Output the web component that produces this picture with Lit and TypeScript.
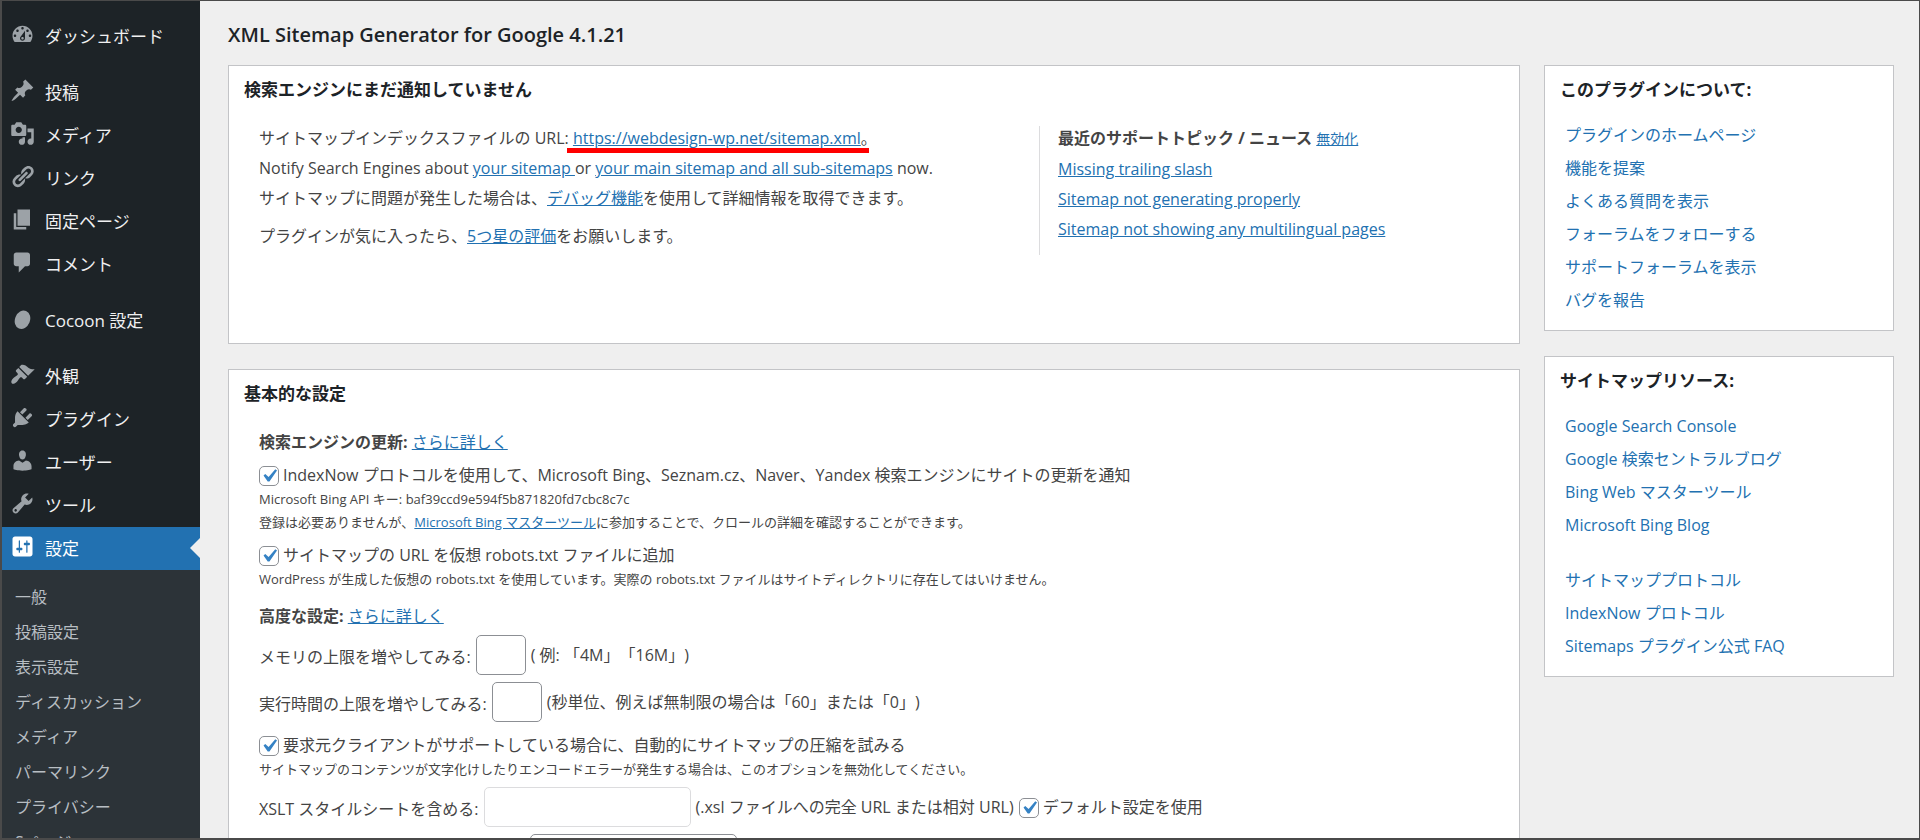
import { LitElement, html, css, svg, nothing } from "lit";
import { customElement, property } from "lit/decorators.js";
import { classMap } from "lit/directives/class-map.js";

const icons: Record<string, unknown> = {
  dashboard: svg`<path d="M3.76 16h12.48c1.1-1.37 1.76-3.11 1.76-5 0-4.42-3.58-8-8-8s-8 3.58-8 8c0 1.89.66 3.63 1.76 5zM10 4c.55 0 1 .45 1 1s-.45 1-1 1-1-.45-1-1 .45-1 1-1zM6 6c.55 0 1 .45 1 1s-.45 1-1 1-1-.45-1-1 .45-1 1-1zm8 0c.55 0 1 .45 1 1s-.45 1-1 1-1-.45-1-1 .45-1 1-1zm-5.37 5.55L12 7v6c0 1.1-.9 2-2 2s-2-.9-2-2c0-.57.24-1.08.63-1.45zM4 10c.55 0 1 .45 1 1s-.45 1-1 1-1-.45-1-1 .45-1 1-1zm12 0c.55 0 1 .45 1 1s-.45 1-1 1-1-.45-1-1 .45-1 1-1zm-5 3c0-.55-.45-1-1-1s-1 .45-1 1 .45 1 1 1 1-.45 1-1z"/>`,
  post: svg`<path d="M10.44 3.02l1.82-1.82 6.36 6.35-1.83 1.82c-1.05-.68-2.48-.57-3.41.36l-.75.75c-.92.93-1.04 2.35-.35 3.41l-1.83 1.82-2.41-2.41-2.8 2.79c-.42.42-3.38 2.71-3.8 2.29s1.86-3.39 2.28-3.81l2.79-2.79L4.1 9.36l1.83-1.82c1.05.69 2.48.57 3.4-.36l.75-.75c.93-.92 1.05-2.35.36-3.41z"/>`,
  media: svg`<path d="M13 11V4c0-.55-.45-1-1-1h-1.67L9 1H5L3.67 3H2c-.55 0-1 .45-1 1v7c0 .55.45 1 1 1h10c.55 0 1-.45 1-1zM7 4.5c1.38 0 2.5 1.12 2.5 2.5S8.38 9.5 7 9.5 4.5 8.38 4.5 7 5.62 4.5 7 4.5zM14 6h5v10.5c0 1.38-1.12 2.5-2.5 2.5S14 17.88 14 16.5s1.12-2.5 2.5-2.5c.17 0 .34.02.5.05V9h-3V6zm-4 8.05V13h2v3.5c0 1.38-1.12 2.5-2.5 2.5S7 17.88 7 16.5 8.12 14 9.5 14c.17 0 .34.02.5.05z"/>`,
  link: svg`<path d="M17.74 2.76c1.68 1.69 1.68 4.41 0 6.1l-1.53 1.52c-1.12 1.12-2.7 1.47-4.14 1.09l2.62-2.61.76-.77.76-.76c.84-.84.84-2.2 0-3.04-.84-.85-2.2-.85-3.04 0l-.77.76-3.38 3.38c-.37-1.44-.02-3.02 1.1-4.14l1.52-1.53c1.69-1.68 4.42-1.68 6.1 0zM8.59 13.43l5.34-5.34c.42-.42.42-1.1 0-1.52-.44-.43-1.13-.39-1.53 0l-5.33 5.34c-.42.42-.42 1.1 0 1.52.44.43 1.13.39 1.52 0zm-.76 2.29l4.14-4.15c.38 1.44.03 3.02-1.09 4.14l-1.52 1.53c-1.69 1.68-4.41 1.68-6.1 0-1.68-1.68-1.68-4.42 0-6.1l1.53-1.52c1.12-1.12 2.7-1.47 4.14-1.1l-4.14 4.15c-.85.84-.85 2.2 0 3.05.84.84 2.2.84 3.04 0z"/>`,
  page: svg`<path d="M6 15V2h10v13H6zm-1 1h8v2H3V5h2v11z"/>`,
  comment: svg`<path d="M5 2h9c1.1 0 2 .9 2 2v7c0 1.1-.9 2-2 2h-2l-5 5v-5H5c-1.1 0-2-.9-2-2V4c0-1.1.9-2 2-2z"/>`,
  cocoon: svg`<ellipse cx="10" cy="11" rx="6" ry="7.6" transform="rotate(22 10 11)"/>`,
  appearance: svg`<path d="M14.48 11.06L7.41 3.99l1.5-1.5c.5-.56 2.3-.47 3.51.32 1.21.8 1.43 1.28 2.91 2.1 1.18.64 2.45 1.26 4.45.85zm-.71.71L6.7 4.7 4.93 6.47c-.39.39-.39 1.02 0 1.41l1.06 1.06c.39.39.39 1.03 0 1.42-.6.6-1.43 1.11-2.21 1.69-.35.26-.7.53-1.01.84C1.43 14.23.4 16.08 1.4 17.07c.99 1 2.84-.03 4.18-1.36.31-.31.58-.66.85-1.02.57-.78 1.08-1.61 1.69-2.21.39-.39 1.02-.39 1.41 0l1.06 1.06c.39.39 1.02.39 1.41 0z"/>`,
  plugin: svg`<path d="M13.11 4.36L9.87 7.6 8 5.73l3.24-3.24c.35-.34 1.05-.2 1.56.32.52.51.66 1.21.31 1.55zm-8 1.77l.91-1.12 9.01 9.01-1.19.84c-.71.71-2.63 1.16-3.82 1.16H6.14L4.9 17.26c-.59.59-1.54.59-2.12 0-.59-.58-.59-1.53 0-2.12l1.24-1.24v-3.88c0-1.13.4-3.19 1.09-3.89zm7.26 3.97l3.24-3.24c.34-.35 1.04-.21 1.55.31.52.51.66 1.21.31 1.55l-3.24 3.25z"/>`,
  user: svg`<path d="M10 9.25c-2.27 0-2.73-3.44-2.73-3.44C7 4.02 7.82 2 9.97 2c2.16 0 2.98 2.02 2.71 3.81 0 0-.41 3.44-2.68 3.44zm0 2.57L12.72 10c2.39 0 4.52 2.33 4.52 4.53v2.49s-3.65 1.13-7.24 1.13c-3.65 0-7.24-1.13-7.24-1.13v-2.49c0-2.25 1.94-4.48 4.47-4.48z"/>`,
  tool: svg`<path d="M16.68 9.77c-1.34 1.34-3.3 1.67-4.95.99l-5.41 6.52c-.99.99-2.59.99-3.58 0s-.99-2.59 0-3.57l6.52-5.42c-.68-1.65-.35-3.61.99-4.95 1.28-1.28 3.12-1.62 4.72-1.06l-2.89 2.89 2.82 2.82 2.86-2.87c.53 1.58.18 3.39-1.08 4.65zM3.81 16.21c.4.39 1.04.39 1.43 0 .4-.4.4-1.04 0-1.43-.39-.4-1.03-.4-1.43 0-.39.39-.39 1.03 0 1.43z"/>`,
  settings: svg`<path d="M18 16V4c0-1.1-.9-2-2-2H4c-1.1 0-2 .9-2 2v12c0 1.1.9 2 2 2h12c1.1 0 2-.9 2-2zM8 11h1c.55 0 1 .45 1 1s-.45 1-1 1H8v1.5c0 .28-.22.5-.5.5s-.5-.22-.5-.5V13H6c-.55 0-1-.45-1-1s.45-1 1-1h1V5.5c0-.28.22-.5.5-.5s.5.22.5.5V11zm5-2h-1c-.55 0-1-.45-1-1s.45-1 1-1h1V5.5c0-.28.22-.5.5-.5s.5.22.5.5V7h1c.55 0 1 .45 1 1s-.45 1-1 1h-1v5.5c0 .28-.22.5-.5.5s-.5-.22-.5-.5V9z"/>`,
};

interface MenuItem {
  icon: string;
  label: string;
  current?: boolean;
}

const menuGroups: MenuItem[][] = [
  [{ icon: "dashboard", label: "ダッシュボード" }],
  [
    { icon: "post", label: "投稿" },
    { icon: "media", label: "メディア" },
    { icon: "link", label: "リンク" },
    { icon: "page", label: "固定ページ" },
    { icon: "comment", label: "コメント" },
  ],
  [{ icon: "cocoon", label: "Cocoon 設定" }],
  [
    { icon: "appearance", label: "外観" },
    { icon: "plugin", label: "プラグイン" },
    { icon: "user", label: "ユーザー" },
    { icon: "tool", label: "ツール" },
    { icon: "settings", label: "設定", current: true },
  ],
];

const subMenu = [
  "一般",
  "投稿設定",
  "表示設定",
  "ディスカッション",
  "メディア",
  "パーマリンク",
  "プライバシー",
  "Sページ",
];

const base = css`
  * {
    box-sizing: border-box;
  }
  h1,
  h2,
  h3,
  p,
  ul {
    margin: 0;
    padding: 0;
  }
  ul {
    list-style: none;
  }
  a {
    color: #2271b1;
  }
`;

@customElement("admin-menu")
export class AdminMenu extends LitElement {
  static styles = [
    base,
    css`
      :host {
        display: block;
        padding-top: 14px;
        background: #1d2327;
        overflow: hidden;
      }
      .menu {
        display: flex;
        flex-direction: column;
        gap: 13px;
      }
      .link {
        position: relative;
        display: flex;
        align-items: center;
        gap: 10px;
        height: 43px;
        padding-left: 8px;
        color: #f0f0f1;
        font-size: 17px;
        line-height: 26px;
        text-decoration: none;
      }
      .icon {
        flex: none;
        width: 25px;
        height: 25px;
        margin-bottom: 4px;
        fill: #9ca2a7;
      }
      .current {
        background: #2271b1;
        color: #fff;
      }
      .current .icon {
        fill: #fff;
      }
      .current::after {
        content: "";
        position: absolute;
        right: 0;
        top: 11px;
        border: 10px solid transparent;
        border-left-width: 0;
        border-right-color: #efefef;
      }
      .sub {
        padding: 10px 0 10px 13px;
        background: #2c3338;
      }
      .sublink {
        display: block;
        color: #b8bec3;
        font-size: 16px;
        line-height: 35px;
        text-decoration: none;
        white-space: nowrap;
      }
    `,
  ];

  render() {
    return html`
      <nav class="menu">
        ${menuGroups.map(
          (group) => html`<ul>
            ${group.map(
              (item) => html`<li>
                <a
                  href="#"
                  class=${classMap({ link: true, current: !!item.current })}
                >
                  <svg class="icon" viewBox="0 0 20 20" aria-hidden="true">${icons[item.icon]}</svg>
                  <span>${item.label}</span>
                </a>
                ${item.current
                  ? html`<ul class="sub">
                      ${subMenu.map(
                        (s) => html`<li><a class="sublink" href="#">${s}</a></li>`
                      )}
                    </ul>`
                  : nothing}
              </li>`
            )}
          </ul>`
        )}
      </nav>
    `;
  }
}

@customElement("post-box")
export class PostBox extends LitElement {
  @property() heading = "";

  static styles = [
    base,
    css`
      :host {
        display: block;
        border: 1px solid #c3c4c7;
        background: #fff;
      }
      .title {
        padding: 12px 15px 0;
        color: #1d2327;
        font-size: 17px;
        font-weight: 700;
        line-height: 24px;
      }
    `,
  ];

  render() {
    return html`<h3 class="title">${this.heading}</h3>
      <slot></slot>`;
  }
}

@customElement("link-list")
export class LinkList extends LitElement {
  @property({ attribute: false }) groups: string[][] = [];

  static styles = [
    base,
    css`
      :host {
        display: flex;
        flex-direction: column;
        gap: 22px;
        padding: 17px 20px 13px;
      }
      .item {
        display: block;
        line-height: 33px;
        text-decoration: none;
      }
    `,
  ];

  render() {
    return this.groups.map(
      (g) => html`<ul>
        ${g.map((t) => html`<li><a class="item" href="#">${t}</a></li>`)}
      </ul>`
    );
  }
}

@customElement("app-root")
export class AppRoot extends LitElement {
  static styles = [
    base,
    css`
      :host {
        display: grid;
        grid-template-columns: 198px minmax(0, 1fr);
        height: 100vh;
        overflow: hidden;
        border: solid #4a4a4a;
        border-width: 1px 1px 2px 2px;
        box-sizing: border-box;
        background: #efefef;
        color: #444;
        font-family: "Open Sans", "Noto Sans CJK JP", sans-serif;
        font-size: 16px;
        line-height: 24px;
        text-spacing-trim: space-all;
      }
      .main {
        padding: 19px 25px 0 28px;
      }
      .page-title {
        margin-bottom: 15px;
        color: #1d2327;
        font-size: 20px;
        font-weight: 600;
        line-height: 30px;
      }
      .columns {
        display: grid;
        grid-template-columns: minmax(0, 1fr) 350px;
        align-items: start;
        gap: 24px;
      }
      .column {
        display: grid;
        gap: 25px;
      }
      .status {
        display: grid;
        grid-template-columns: 26fr 15fr;
        padding: 24px 30px 88px;
      }
      .lines {
        display: flex;
        flex-direction: column;
        gap: 6px;
      }
      .thanks {
        margin-top: 8px;
      }
      .news {
        padding: 0 0 14px 18px;
        border-left: 1px solid #dcdcde;
      }
      .mark {
        position: relative;
        display: inline-block;
      }
      .mark::after {
        content: "";
        position: absolute;
        left: -6px;
        right: 8px;
        bottom: -3px;
        height: 5px;
        background: #f00;
      }
      .minor {
        font-size: 14px;
      }
      .settings {
        padding: 24px 30px;
      }
      .option {
        margin-top: 9px;
      }
      .check {
        display: flex;
        align-items: center;
        gap: 4px;
      }
      .note {
        padding-top: 1px;
        font-size: 13px;
        line-height: 23px;
      }
      .subhead {
        margin-top: 13px;
      }
      .fields {
        display: grid;
        gap: 7px;
        margin: 7px 0 11px;
      }
      .fields.last {
        margin-top: 6px;
      }
      .field {
        display: flex;
        align-items: center;
        gap: 5px;
      }
      .label {
        padding-top: 4px;
      }
      .box {
        width: 50px;
        height: 40px;
        padding: 0 10px;
        border: 1px solid #8c8f94;
        border-radius: 5px;
        background: #fff;
        color: #2c3338;
        font: inherit;
      }
      .box.wide {
        width: 207px;
      }
      .box:disabled {
        border-color: #dcdcde;
      }
      .tick {
        appearance: none;
        flex: none;
        width: 20px;
        height: 20px;
        margin: 2px 0 0;
        border: 1px solid #8c8f94;
        border-radius: 5px;
        background: #fff;
      }
      .tick:checked {
        background: #fff
          url("data:image/svg+xml,%3Csvg xmlns='http://www.w3.org/2000/svg' viewBox='0 0 20 20'%3E%3Cpath d='M14.83 4.89l1.34.94-5.81 8.38H9.02L5.78 9.67l1.34-1.25 2.57 2.4z' fill='%233582c4'/%3E%3C/svg%3E")
          center / 26px 26px no-repeat;
      }
    `,
  ];

  render() {
    return html`
      <admin-menu></admin-menu>
      <main class="main">
        <h1 class="page-title">XML Sitemap Generator for Google 4.1.21</h1>
        <div class="columns">
          <div class="column">
            <post-box heading="検索エンジンにまだ通知していません">
              <div class="status">
                <div class="lines">
                  <p>サイトマップインデックスファイルの URL: <span class="mark"><a href="#">https://webdesign-wp.net/sitemap.xml</a>。</span></p>
                  <p>Notify Search Engines about <a href="#">your sitemap </a>or <a href="#">your main sitemap and all sub-sitemaps</a> now.</p>
                  <p>サイトマップに問題が発生した場合は、<a href="#">デバッグ機能</a>を使用して詳細情報を取得できます。</p>
                  <p class="thanks">プラグインが気に入ったら、<a href="#">5つ星の評価</a>をお願いします。</p>
                </div>
                <div class="lines news">
                  <p><strong>最近のサポートトピック / ニュース</strong> <a class="minor" href="#">無効化</a></p>
                  <p><a href="#">Missing trailing slash</a></p>
                  <p><a href="#">Sitemap not generating properly</a></p>
                  <p><a href="#">Sitemap not showing any multilingual pages</a></p>
                </div>
              </div>
            </post-box>

            <post-box heading="基本的な設定">
              <form class="settings">
                <p><strong>検索エンジンの更新:</strong> <a href="#">さらに詳しく</a></p>

                <div class="option">
                  <div class="check">
                    <input class="tick" id="indexnow" type="checkbox" checked />
                    <label for="indexnow">IndexNow プロトコルを使用して、Microsoft Bing、Seznam.cz、Naver、Yandex 検索エンジンにサイトの更新を通知</label>
                  </div>
                  <div class="note">
                    <p>Microsoft Bing API キー: baf39ccd9e594f5b871820fd7cbc8c7c</p>
                    <p>登録は必要ありませんが、<a href="#">Microsoft Bing マスターツール</a>に参加することで、クロールの詳細を確認することができます。</p>
                  </div>
                </div>

                <div class="option">
                  <div class="check">
                    <input class="tick" id="robots" type="checkbox" checked />
                    <label for="robots">サイトマップの URL を仮想 robots.txt ファイルに追加</label>
                  </div>
                  <p class="note">WordPress が生成した仮想の robots.txt を使用しています。実際の robots.txt ファイルはサイトディレクトリに存在してはいけません。</p>
                </div>

                <p class="subhead"><strong>高度な設定:</strong> <a href="#">さらに詳しく</a></p>

                <div class="fields">
                  <div class="field">
                    <label class="label" for="memory">メモリの上限を増やしてみる:</label>
                    <input class="box" id="memory" type="text" />
                    <span>( 例: 「4M」「16M」)</span>
                  </div>
                  <div class="field">
                    <label class="label" for="time">実行時間の上限を増やしてみる:</label>
                    <input class="box" id="time" type="text" />
                    <span>(秒単位、例えば無制限の場合は「60」または「0」)</span>
                  </div>
                </div>

                <div class="check">
                  <input class="tick" id="gzip" type="checkbox" checked />
                  <label for="gzip">要求元クライアントがサポートしている場合に、自動的にサイトマップの圧縮を試みる</label>
                </div>
                <p class="note">サイトマップのコンテンツが文字化けしたりエンコードエラーが発生する場合は、このオプションを無効化してください。</p>

                <div class="fields last">
                  <div class="field">
                    <label class="label" for="xslt">XSLT スタイルシートを含める:</label>
                    <input class="box wide" id="xslt" type="text" disabled />
                    <span>(.xsl ファイルへの完全 URL または相対 URL)</span>
                    <span class="check">
                      <input class="tick" id="xslt-default" type="checkbox" checked />
                      <label for="xslt-default">デフォルト設定を使用</label>
                    </span>
                  </div>
                  <div class="field">
                    <label class="label" for="baseurl">サイトマップのベース URL を上書き:</label>
                    <input class="box wide" id="baseurl" type="text" />
                  </div>
                </div>
              </form>
            </post-box>
          </div>

          <aside class="column">
            <post-box heading="このプラグインについて:">
              <link-list
                .groups=${[
                  [
                    "プラグインのホームページ",
                    "機能を提案",
                    "よくある質問を表示",
                    "フォーラムをフォローする",
                    "サポートフォーラムを表示",
                    "バグを報告",
                  ],
                ]}
              ></link-list>
            </post-box>
            <post-box heading="サイトマップリソース:">
              <link-list
                .groups=${[
                  [
                    "Google Search Console",
                    "Google 検索セントラルブログ",
                    "Bing Web マスターツール",
                    "Microsoft Bing Blog",
                  ],
                  [
                    "サイトマッププロトコル",
                    "IndexNow プロトコル",
                    "Sitemaps プラグイン公式 FAQ",
                  ],
                ]}
              ></link-list>
            </post-box>
          </aside>
        </div>
      </main>
    `;
  }
}
